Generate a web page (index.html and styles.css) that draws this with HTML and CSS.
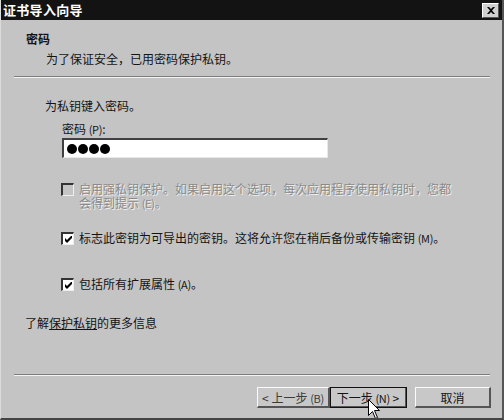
FILE: index.html
```html
<!DOCTYPE html>
<html lang="zh-CN">
<head>
    <meta charset="UTF-8">
    <title>证书导入向导</title>
    <link rel="stylesheet" href="styles.css">
</head>
<body>
    <div class="window">
        <div class="titlebar">
            <span class="title">证书导入向导</span>
            <span class="close">
                <svg width="8" height="7" viewBox="0 0 8 7"><path d="M0 0h2l2 2 2-2h2L5 3.5 8 7H6L4 5 2 7H0l3-3.5z" fill="#000"/></svg>
            </span>
        </div>

        <div class="header">
            <div class="heading">密码</div>
            <div class="subheading">为了保证安全，已用密码保护私钥。</div>
        </div>
        <div class="rule"></div>

        <div class="content">
            <p class="prompt">为私钥键入密码。</p>
            <div class="field-label">密码 <span class="key">(P)</span>:</div>
            <div class="password">
                <span class="dot"></span><span class="dot"></span><span class="dot"></span><span class="dot"></span>
            </div>

            <div class="option option-first disabled">
                <span class="check"></span>
                <span class="option-text">启用强私钥保护。如果启用这个选项，每次应用程序使用私钥时，您都<br>会得到提示 <span class="key">(E)</span>。</span>
            </div>
            <div class="option option-second">
                <span class="check checked">
                    <svg width="7" height="7" viewBox="0 0 7 7"><path d="M0 2v3l2 2 5-5V-1L2 4z" fill="#000"/></svg>
                </span>
                <span class="option-text">标志此密钥为可导出的密钥。这将允许您在稍后备份或传输密钥 <span class="key">(M)</span>。</span>
            </div>
            <div class="option option-third">
                <span class="check checked">
                    <svg width="7" height="7" viewBox="0 0 7 7"><path d="M0 2v3l2 2 5-5V-1L2 4z" fill="#000"/></svg>
                </span>
                <span class="option-text">包括所有扩展属性 <span class="key">(A)</span>。</span>
            </div>

            <p class="more">了解<a href="#">保护私钥</a>的更多信息</p>
        </div>
        <div class="rule"></div>

        <div class="footer">
            <button class="btn btn-back">&lt; 上一步 <span class="key">(B)</span></button>
            <button class="btn btn-next">下一步 <span class="key">(N)</span> &gt;</button>
            <button class="btn btn-cancel">取消</button>
        </div>

        <svg class="cursor" width="13" height="20" viewBox="0 0 13 20">
            <path d="M0.5 0.5V16.5L4.5 12.5L7.5 19.5L9.5 18.5L6.5 11.5H11.5Z" fill="#fff" stroke="#000" stroke-width="1"/>
        </svg>
    </div>
</body>
</html>
```

FILE: styles.css
```css
body {
    margin: 0;
    font-family: "Noto Sans CJK SC", "Noto Sans", sans-serif;
    font-size: 12px;
    color: #141414;
    background: #c4c4c4;
}

.window {
    position: relative;
    width: 504px;
    height: 420px;
    box-sizing: border-box;
    background: #c4c4c4;
    border-left: 1px solid #dcdcdc;
    border-right: 2px solid #555;
    border-bottom: 2px solid #444;
    overflow: hidden;
}

.titlebar {
    display: flex;
    justify-content: space-between;
    align-items: center;
    height: 20px;
    margin-left: -1px;
    margin-right: -2px;
    padding: 0 5px 0 3px;
    background: #131313;
}

.title {
    color: #fff;
    font-weight: bold;
    font-size: 13px;
    line-height: 20px;
    letter-spacing: 0.3px;
}

.close {
    display: flex;
    justify-content: center;
    align-items: center;
    width: 15px;
    height: 13px;
    background: #d0d0d0;
    border-top: 1px solid #fff;
    border-left: 1px solid #fff;
    border-right: 1px solid #555;
    border-bottom: 1px solid #555;
}

.header {
    height: 56px;
    box-sizing: border-box;
    padding: 12px 0 0 25px;
}

.heading {
    font-weight: bold;
    line-height: 14px;
}

.subheading {
    margin-top: 6px;
    padding-left: 20px;
    line-height: 14px;
}

.rule {
    height: 0;
    margin: 0 12px 0 13px;
    border-top: 1px solid #7c7c7c;
    border-bottom: 1px solid #f4f4f4;
}

.key {
    font-size: 11px;
    letter-spacing: -0.3px;
}

.content {
    height: 296px;
    box-sizing: border-box;
    padding-top: 21px;
}

.prompt {
    margin: 0 0 0 44px;
    line-height: 14px;
}

.field-label {
    margin: 9px 0 0 61px;
    line-height: 14px;
}

.password {
    display: flex;
    align-items: center;
    gap: 1px;
    width: 266px;
    height: 20px;
    box-sizing: border-box;
    margin: 2px 0 0 61px;
    padding-left: 3px;
    background: #fff;
    border-top: 2px solid #404040;
    border-left: 2px solid #404040;
    border-right: 1px solid #e8e8e8;
    border-bottom: 1px solid #e8e8e8;
}

.dot {
    width: 10px;
    height: 10px;
    border-radius: 50%;
    background: #000;
}

.option {
    display: flex;
    align-items: flex-start;
    gap: 5px;
    margin-left: 60px;
}

.option-first {
    margin-top: 25px;
}

.option-second {
    margin-top: 22px;
}

.option-third {
    margin-top: 33px;
}

.check {
    display: flex;
    justify-content: center;
    align-items: center;
    flex: none;
    width: 13px;
    height: 13px;
    box-sizing: border-box;
    background: #fff;
    border-top: 2px solid #333;
    border-left: 2px solid #333;
    border-right: 1px solid #eee;
    border-bottom: 1px solid #eee;
}

.option-text {
    line-height: 14px;
    margin-top: -1px;
}

.disabled .check {
    background: #c4c4c4;
}

.disabled .option-text {
    color: #8a8a8a;
    text-shadow: 1px 1px 0 #f0f0f0;
}

.more {
    margin: 25px 0 0 24px;
    line-height: 14px;
}

.more a {
    color: inherit;
    text-decoration: underline;
}

.footer {
    display: flex;
    justify-content: flex-end;
    padding: 11px 11px 0 0;
}

.btn {
    height: 21px;
    padding: 0;
    font-family: inherit;
    font-size: 12px;
    color: #141414;
    background: #c8c8c8;
    border-top: 1px solid #fafafa;
    border-left: 1px solid #fafafa;
    border-right: 2px solid #555;
    border-bottom: 2px solid #555;
    white-space: nowrap;
}

.btn-back {
    width: 73px;
    color: #3a3a3a;
}

.btn-next {
    width: 77px;
    margin-right: 8px;
    outline: 1px solid #111;
    outline-offset: -1px;
}

.btn-cancel {
    width: 76px;
}

.cursor {
    position: absolute;
    left: 367px;
    top: 399px;
}
```
